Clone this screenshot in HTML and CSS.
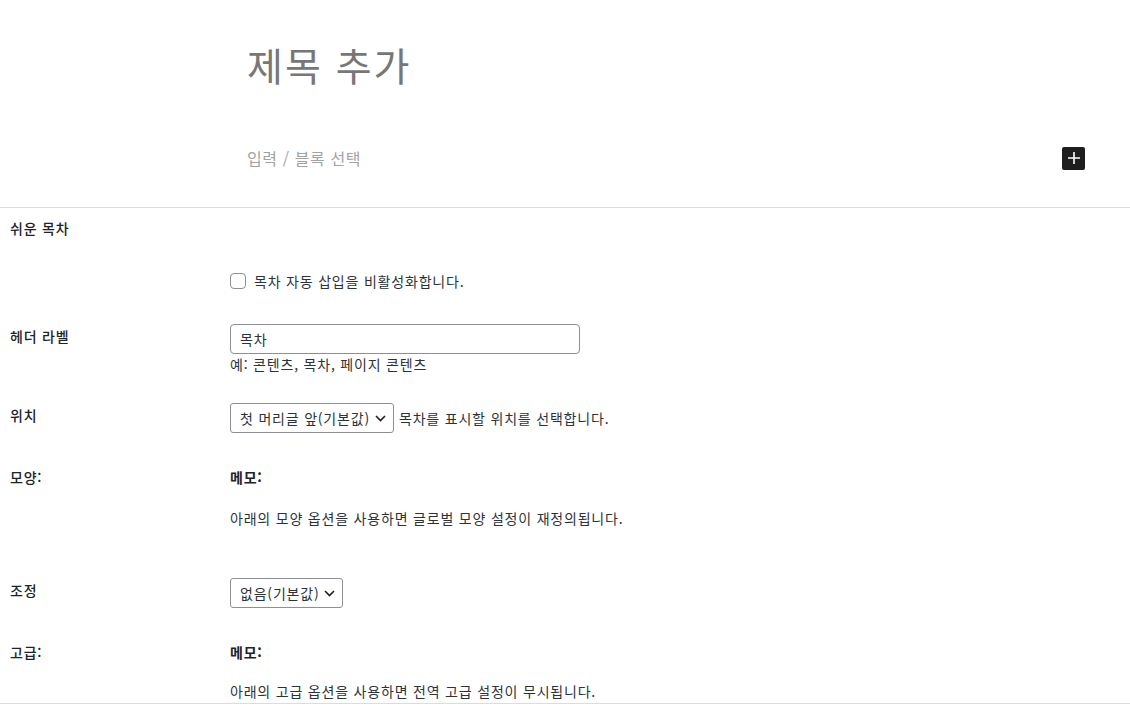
FILE: index.html
```html
<!DOCTYPE html>
<html lang="ko">

<head>
    <meta charset="UTF-8">
    <meta name="viewport" content="width=device-width, initial-scale=1.0">
    <title>제목 추가</title>
    <link rel="stylesheet" href="styles.css">
</head>

<body>
    <div class="editor">
        <h1 class="post-title">제목 추가</h1>
        <div class="block-row">
            <p class="block-placeholder">입력 / 블록 선택</p>
            <button class="inserter" aria-label="블록 추가">
                <svg width="14" height="14" viewBox="0 0 14 14">
                    <path d="M7 1v12M1 7h12" stroke="#fff" stroke-width="1.6" fill="none" />
                </svg>
            </button>
        </div>
    </div>

    <div class="metabox">
        <div class="row row-title">
            <div class="label">쉬운 목차</div>
            <div class="field"></div>
        </div>
        <div class="row row-check">
            <div class="label"></div>
            <div class="field">
                <label class="check"><span class="box"></span>목차 자동 삽입을 비활성화합니다.</label>
            </div>
        </div>
        <div class="row row-header">
            <div class="label control-label">헤더 라벨</div>
            <div class="field">
                <div class="text-input">목차</div>
                <div class="desc">예: 콘텐츠, 목차, 페이지 콘텐츠</div>
            </div>
        </div>
        <div class="row row-position">
            <div class="label control-label">위치</div>
            <div class="field inline">
                <div class="select">첫 머리글 앞(기본값)
                    <svg class="chev" width="11" height="7" viewBox="0 0 11 7">
                        <path d="M1 1l4.5 4.5L10 1" stroke="#1e1e1e" stroke-width="1.6" fill="none" />
                    </svg>
                </div>
                <span class="hint">목차를 표시할 위치를 선택합니다.</span>
            </div>
        </div>
        <div class="row row-appearance">
            <div class="label">모양:</div>
            <div class="field">
                <div class="note-title">메모:</div>
                <div class="note">아래의 모양 옵션을 사용하면 글로벌 모양 설정이 재정의됩니다.</div>
            </div>
        </div>
        <div class="row row-align">
            <div class="label control-label">조정</div>
            <div class="field">
                <div class="select">없음(기본값)
                    <svg class="chev" width="11" height="7" viewBox="0 0 11 7">
                        <path d="M1 1l4.5 4.5L10 1" stroke="#1e1e1e" stroke-width="1.6" fill="none" />
                    </svg>
                </div>
            </div>
        </div>
        <div class="row row-advanced">
            <div class="label">고급:</div>
            <div class="field">
                <div class="note-title">메모:</div>
                <div class="note note-adv">아래의 고급 옵션을 사용하면 전역 고급 설정이 무시됩니다.</div>
            </div>
        </div>
    </div>
</body>

</html>
```

FILE: styles.css
```css
body {
    margin: 0;
    padding: 0;
    font-family: "Noto Sans CJK KR", "Noto Sans", sans-serif;
    color: #2c3338;
    background-color: #fff;
}

.editor {
    padding: 37px 45px 37px 247px;
    border-bottom: 1px solid #dcdcde;
}

.post-title {
    margin: 0;
    font-size: 39px;
    line-height: 55px;
    font-weight: 400;
    letter-spacing: 2px;
    color: #777;
}

.block-row {
    display: flex;
    align-items: center;
    justify-content: space-between;
    margin-top: 54px;
}

.block-placeholder {
    margin: 0;
    font-size: 16px;
    line-height: 24px;
    letter-spacing: 0.6px;
    color: #a2a2a2;
}

.inserter {
    width: 23px;
    height: 23px;
    padding: 0;
    border: none;
    border-radius: 2px;
    background-color: #1e1e1e;
    display: flex;
    align-items: center;
    justify-content: center;
}

.metabox {
    border-bottom: 1px solid #dcdcde;
    padding-bottom: 2px;
    font-size: 14px;
    line-height: 20px;
    letter-spacing: 0.8px;
}

.row {
    display: grid;
    grid-template-columns: 220px 1fr;
    padding-left: 10px;
}

.label {
    font-weight: 500;
    color: #1d2327;
}

.control-label {
    padding-top: 2px;
}

.row-title { padding-top: 10px; }
.row-check { padding-top: 33px; }
.row-header { padding-top: 33px; }
.row-position { padding-top: 29px; }
.row-appearance { padding-top: 34px; }
.row-align { padding-top: 50px; }
.row-advanced { padding-top: 34px; }

.check {
    display: flex;
    align-items: center;
    gap: 8px;
}

.box {
    width: 14px;
    height: 14px;
    border: 1px solid #8c8f94;
    border-radius: 4px;
    background-color: #fff;
}

.text-input {
    height: 28px;
    border: 1px solid #8c8f94;
    border-radius: 4px;
    padding: 0 9px;
    width: 330px;
    line-height: 28px;
}

.inline {
    display: flex;
    align-items: center;
    gap: 5px;
}

.select {
    display: inline-flex;
    align-items: center;
    gap: 5px;
    height: 28px;
    padding: 0 7px 0 9px;
    border: 1px solid #8c8f94;
    border-radius: 3px;
}

.note-title {
    font-weight: 700;
    color: #1d2327;
}

.note {
    margin-top: 21px;
}

.note-adv {
    margin-top: 19px;
}
```
